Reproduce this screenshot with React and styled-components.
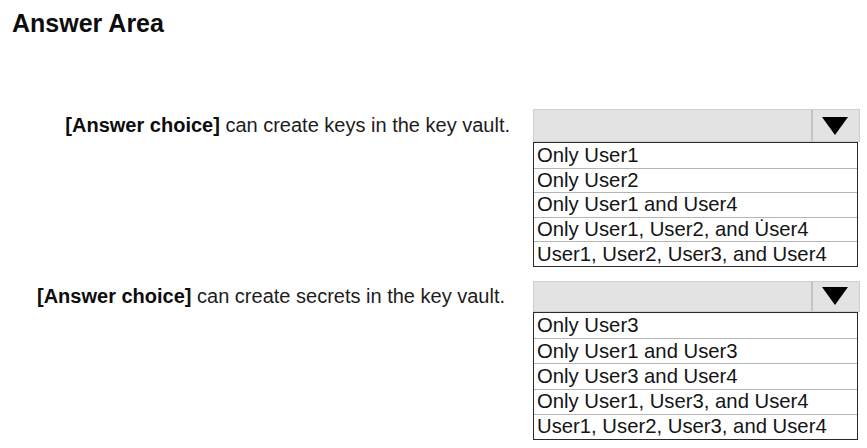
import React from "react";
import styled, { createGlobalStyle } from "styled-components";

const GlobalStyle = createGlobalStyle`
  body {
    margin: 0;
    background: #ffffff;
    font-family: "Liberation Sans", Arial, sans-serif;
    color: #111111;
  }
`;

const Page = styled.div`
  width: 867px;
  height: 448px;
  padding: 9px 0 0 12px;
  box-sizing: border-box;
`;

const Title = styled.h1`
  margin: 0;
  font-size: 25px;
  line-height: 29px;
  font-weight: bold;
  color: #0d0d0d;
`;

const Questions = styled.div`
  display: flex;
  flex-direction: column;
  gap: 14px;
  margin-top: 71px;
`;

const Question = styled.div`
  display: grid;
  grid-template-columns: 498px 327px;
  column-gap: 23px;
  align-items: start;
`;

const Label = styled.div`
  height: ${(p) => p.$h}px;
  display: flex;
  align-items: center;
  justify-content: flex-end;
  padding-right: ${(p) => p.$pad}px;
  font-size: 20px;
  color: #1c1c1c;
  white-space: nowrap;
  b {
    color: #0d0d0d;
  }
`;

const Dropdown = styled.div`
  display: flex;
  flex-direction: column;
`;

const Header = styled.div`
  height: ${(p) => p.$h}px;
  display: flex;
  background: #e3e3e3;
  border: 1px solid #cfcfcf;
  box-sizing: border-box;
`;

const HeaderField = styled.div`
  flex: 1;
  border-right: 2px solid #c4c4c4;
`;

const ArrowButton = styled.div`
  width: 43px;
  display: flex;
  align-items: center;
  justify-content: center;
  padding-right: 3px;
`;

const Options = styled.div`
  border: 1.5px solid #2b2b2b;
  margin-right: 2px;
  background: #ffffff;
`;

const Option = styled.div`
  height: ${(p) => p.$h}px;
  display: flex;
  align-items: center;
  padding-left: 3px;
  font-size: 20.3px;
  color: #141414;
  box-sizing: border-box;
  white-space: nowrap;
  & + & {
    border-top: 1px solid #b5b5b5;
  }
`;

const Arrow = () => (
  <svg width="26" height="18" viewBox="0 0 26 18">
    <polygon points="0,0 26,0 13,18" fill="#000" />
  </svg>
);

const questions = [
  {
    action: "can create keys in the key vault.",
    headerH: 33,
    rowH: 24.6,
    pad: 0,
    options: [
      "Only User1",
      "Only User2",
      "Only User1 and User4",
      "Only User1, User2, and U\u0307ser4",
      "User1, User2, User3, and User4",
    ],
  },
  {
    action: "can create secrets in the key vault.",
    headerH: 31,
    rowH: 25.2,
    pad: 5,
    options: [
      "Only User3",
      "Only User1 and User3",
      "Only User3 and User4",
      "Only User1, User3, and User4",
      "User1, User2, User3, and User4",
    ],
  },
];

const App = () => (
  <Page>
    <GlobalStyle />
    <Title>Answer Area</Title>
    <Questions>
      {questions.map((q, i) => (
        <Question key={i}>
          <Label $h={q.headerH} $pad={q.pad}>
            <span>
              <b>[Answer choice]</b> {q.action}
            </span>
          </Label>
          <Dropdown>
            <Header $h={q.headerH}>
              <HeaderField />
              <ArrowButton>
                <Arrow />
              </ArrowButton>
            </Header>
            <Options>
              {q.options.map((o) => (
                <Option key={o} $h={q.rowH}>
                  {o}
                </Option>
              ))}
            </Options>
          </Dropdown>
        </Question>
      ))}
    </Questions>
  </Page>
);

export default App;
